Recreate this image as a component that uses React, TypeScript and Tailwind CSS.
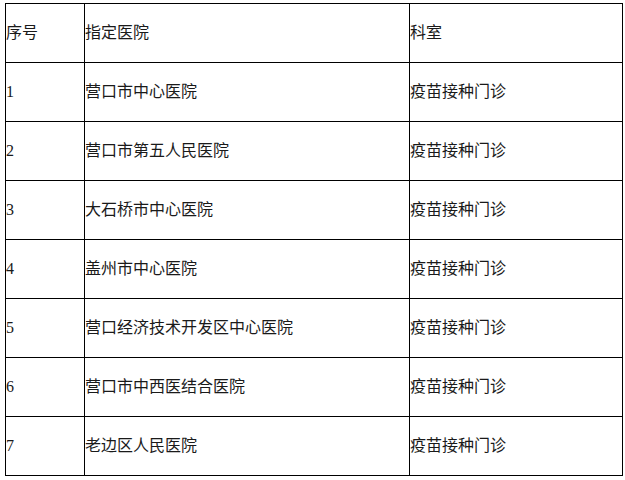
const rows = [
  ["1", "营口市中心医院", "疫苗接种门诊"],
  ["2", "营口市第五人民医院", "疫苗接种门诊"],
  ["3", "大石桥市中心医院", "疫苗接种门诊"],
  ["4", "盖州市中心医院", "疫苗接种门诊"],
  ["5", "营口经济技术开发区中心医院", "疫苗接种门诊"],
  ["6", "营口市中西医结合医院", "疫苗接种门诊"],
  ["7", "老边区人民医院", "疫苗接种门诊"],
];

export default function App() {
  return (
    <div className="w-[625px] h-[480px] bg-white pt-[3px] pl-[5px]">
      <table
        className="table-fixed border-collapse w-[617px] text-[16px] leading-none text-[#1a1a1a]"
        style={{ fontFamily: '"Liberation Serif", "Noto Sans CJK SC", serif' }}
      >
        <colgroup>
          <col className="w-[79px]" />
          <col className="w-[325px]" />
          <col className="w-[213px]" />
        </colgroup>
        <tbody>
          <tr>
            <td className="border border-black h-[59px] p-0 align-middle">序号</td>
            <td className="border border-black h-[59px] p-0 align-middle">指定医院</td>
            <td className="border border-black h-[59px] p-0 align-middle">科室</td>
          </tr>
          {rows.map((r) => (
            <tr key={r[0]}>
              {r.map((c, i) => (
                <td key={i} className="border border-black h-[59px] p-0 align-middle">
                  {c}
                </td>
              ))}
            </tr>
          ))}
        </tbody>
      </table>
    </div>
  );
}
